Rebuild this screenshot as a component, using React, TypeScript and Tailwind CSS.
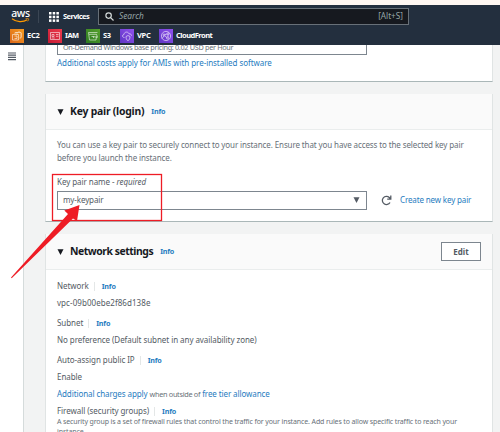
import React from 'react';

function Caret({ className = '' }: { className?: string }) {
  return (
    <svg className={`shrink-0 ${className}`} width="7" height="6" viewBox="0 0 7 6">
      <path d="M0.500 0.300h6L3.500 5.900z" fill="currentColor" />
    </svg>
  );
}

function AwsLogo() {
  return (
    <div className="flex h-[16px] w-[19px] flex-col items-center">
      <span className="h-[9px] text-[10.500px] leading-[8px] font-medium tracking-[-0.3px] text-white">aws</span>
      <svg width="19" height="5" viewBox="0 0 19 5" fill="none" stroke="#ff9900">
        <path d="M1 0.8C5.5 4.3 12 4.4 16.3 1.8" strokeWidth="1.3" />
        <path d="M14.6 0.7c1.4-.3 2.7-.3 3 .1.2.5-.2 1.600-.9 2.500" strokeWidth="0.8" />
      </svg>
    </div>
  );
}

function ServiceTile({ kind, className }: { kind: string; className: string }) {
  return (
    <span className={`flex h-[14px] w-[14px] shrink-0 items-center justify-center ${className}`}>
      <svg width="14" height="14" viewBox="0 0 14 14" fill="none" stroke="#fff" strokeOpacity="0.7" strokeWidth="0.8">
        {kind === 'ec2' && <path d="M5 5V3.500h6v5.500H9.500M2.500 5.500h6V11h-6zM4.500 7h2.500v2.500h-2.500M7 5.500V3M9 3V2M11 5h1M11 7h1" />}
        {kind === 'iam' && <path d="M2.500 3.500h9v7h-9zM4 5.500h2v2H4zM3.700 9h3M8 5.500h2.500M8 7.300h2.500" />}
        {kind === 's3' && <path d="M2.500 3.500h9M2.500 3.500l1 7.500h6.500l.5-3.500M3 5.300h7.500l1 3-4.300-.8M5.500 7.500h2v1.500" />}
        {kind === 'vpc' && <path d="M4.500 8.500C2 8.500 1.800 5.800 4 5.500c.2-3 4.200-3.200 5-.7 2 0 2.700 1 2.500 2M6 7.500l2-1 2 1c0 2.500-.8 3.500-2 4.200-1.300-.7-2-1.800-2-4.200z" />}
        {kind === 'cf' && (
          <>
            <circle cx="7" cy="7" r="4.600" />
            <circle cx="5" cy="6" r="1" />
            <circle cx="9" cy="4.800" r="1" />
            <circle cx="8.500" cy="9" r="1" />
            <path d="M5.800 5.600L8 5M5.700 6.800l2.100 1.600M3 9.500L5 7M9 5.800v2.300" />
          </>
        )}
      </svg>
    </span>
  );
}

const favorites = [
  { kind: 'ec2', label: 'EC2', tile: 'bg-linear-to-tr from-[#d9661a] to-[#f59a1f]', item: 'w-[38px] tracking-[-0.3px]' },
  { kind: 'iam', label: 'IAM', tile: 'bg-linear-to-tr from-[#c51a35] to-[#ee3a4c]', item: 'w-[38px] tracking-[-0.5px]' },
  { kind: 's3', label: 'S3', tile: 'bg-linear-to-tr from-[#2c7a22] to-[#55a02c]', item: 'w-[34px] tracking-[-0.5px]' },
  { kind: 'vpc', label: 'VPC', tile: 'bg-linear-to-tr from-[#5f35c4] to-[#9150ee]', item: 'w-[39px] tracking-[-0.3px]' },
  { kind: 'cf', label: 'CloudFront', tile: 'bg-linear-to-tr from-[#5f35c4] to-[#9150ee]', item: 'w-[60px] tracking-[-0.520px]' },
];

function TopNav() {
  return (
    <header className="h-[40px] shrink-0 bg-[#232f3e] text-white">
      <div className="flex h-[23px] items-center pl-[11px]">
        <AwsLogo />
        <span className="ml-[8px] h-[13px] w-px bg-[#3b4654]" />
        <svg className="ml-[10px]" width="10" height="10" viewBox="0 0 10 10" fill="#fff">
          {[0, 3.7, 7.4].map((y) => [0, 3.7, 7.4].map((x) => <rect key={`${x}-${y}`} x={x} y={y} width="2.500" height="2.500" />))}
        </svg>
        <span className="ml-[4px] w-[35px] text-[7.500px] font-bold tracking-[-0.550px] whitespace-nowrap">Services</span>
        <div className="flex h-[17px] w-[311px] items-center border border-[#687078] bg-[#16191f] pr-[5px] pl-[6px] text-[#95a5a6]">
          <svg width="9" height="9" viewBox="0 0 9 9" fill="none" stroke="#d5dbdb" strokeWidth="1.200">
            <circle cx="3.600" cy="3.600" r="2.700" />
            <path d="M5.600 5.600L8.500 8.500" />
          </svg>
          <span className="ml-[5px] flex-1 text-[8.300px] italic">Search</span>
          <span className="text-[8.200px]">[Alt+S]</span>
        </div>
      </div>
      <div className="flex h-[15px] items-center pl-[10px] text-[7.500px] font-bold">
        {favorites.map((f) => (
          <div key={f.kind} className={`flex shrink-0 items-center gap-[3px] whitespace-nowrap ${f.item}`}>
            <ServiceTile kind={f.kind} className={f.tile} />
            {f.label}
          </div>
        ))}
      </div>
    </header>
  );
}

function Info({ divided = false }: { divided?: boolean }) {
  return (
    <>
      {divided && <span className="ml-[5px] h-[9px] w-px bg-[#e4e7e7]" />}
      <span className="ml-[7px] text-[7.200px] font-bold tracking-[-0.2px] text-[#1f7cc0]">Info</span>
    </>
  );
}

function PanelHeader({ title, children, className }: { title: string; children?: React.ReactNode; className: string }) {
  return (
    <div className="flex h-[36px] shrink-0 items-center border-b border-[#eaeded] bg-[#fafafa] pr-[11px] pl-[11px] text-[#16191f]">
      <Caret />
      <h2 className={`ml-[6px] text-[10.400px] font-bold whitespace-nowrap ${className}`}>{title}</h2>
      <Info />
      {children}
    </div>
  );
}

const panel = 'w-[448px] border-x border-[#e0e4e4] bg-white';

export default function App() {
  return (
    <div className="relative flex h-[432px] w-[500px] flex-col overflow-hidden bg-[#fff7f2] pt-[5px] font-['Noto_Sans','Open_Sans',sans-serif] text-[8px] text-[#545b64]">
      <TopNav />
      <div className="flex min-h-0 flex-1">
        <aside className="w-[24px] shrink-0 border-r border-[#d5dbdb] bg-white pt-[7px] pl-[8px]">
          <svg width="8" height="9" viewBox="0 0 8 9" stroke="#545b64" strokeWidth="1.200">
            <path d="M0 1h8M0 3.200h8M0 5.400h8M0 7.600h8" />
          </svg>
        </aside>
        <main className="flex-1 overflow-hidden bg-[#f2f3f3] pl-[21px]">
          <section className={`h-[37px] border-b border-b-[#aab7b8] pl-[11px] ${panel}`}>
            <div className="flex h-[10px] w-[310px] items-end overflow-hidden border border-t-0 border-[#7d868f] pl-[5px]">
              <span className="mb-[2px] text-[7.300px] leading-[10px] tracking-[-0.330px] whitespace-nowrap text-[#687078]">On-Demand Windows base pricing: 0.02 USD per Hour</span>
            </div>
            <p className="mt-[2px] leading-[12px] tracking-[-0.060px] whitespace-nowrap text-[#1f7cc0]">Additional costs apply for AMIs with pre-installed software</p>
          </section>

          <section className={`mt-[12px] flex h-[128px] flex-col border-b border-b-[#aab7b8] ${panel}`}>
            <PanelHeader title="Key pair (login)" className="tracking-[-0.220px]" />
            <div className="pt-[9px] pl-[11px]">
              <p className="leading-[12.500px] tracking-[-0.110px] whitespace-nowrap text-[#687078]">
                You can use a key pair to securely connect to your instance. Ensure that you have access to the selected key pair
                <br />
                before you launch the instance.
              </p>
              <p className="mt-[12px] leading-[12px] tracking-[-0.060px]">
                Key pair name - <i>required</i>
              </p>
              <div className="mt-[3px] flex items-center">
                <div className="flex h-[19px] w-[310px] items-center justify-between border border-[#7d868f] pr-[6px] pb-[1px] pl-[5px] tracking-[-0.120px]">
                  my-keypair
                  <Caret />
                </div>
                <svg className="ml-[14px]" width="11" height="11" viewBox="0 0 11 11" fill="none" stroke="#545b64" strokeWidth="1.300">
                  <path d="M9 7.500A4.100 4.100 0 1 1 8.300 2.500L9.600 4M9.800 0.500V4.200H6.200" />
                </svg>
                <span className="ml-[8px] pb-[1px] tracking-[-0.140px] whitespace-nowrap text-[#1f7cc0]">Create new key pair</span>
              </div>
            </div>
          </section>

          <section className={`mt-[12px] h-[210px] ${panel}`}>
            <PanelHeader title="Network settings" className="tracking-[-0.450px]">
              <button className="ml-auto h-[19px] w-[40px] border border-[#7d868f] bg-white text-[8px] font-bold text-[#545b64]">Edit</button>
            </PanelHeader>
            <div className="pt-[10px] pl-[11px] leading-[12px] tracking-[-0.060px] whitespace-nowrap">
              <div className="flex h-[12px] items-center">Network<Info divided /></div>
              <p className="mt-[5px] tracking-[0.060px]">vpc-09b00ebe2f86d138e</p>
              <div className="mt-[8px] flex h-[12px] items-center">Subnet<Info divided /></div>
              <p className="mt-[5px]">No preference (Default subnet in any availability zone)</p>
              <div className="mt-[8px] flex h-[12px] items-center">Auto-assign public IP<Info divided /></div>
              <p className="mt-[5px]">Enable</p>
              <p className="mt-[5px] tracking-[-0.090px] text-[#1f7cc0]">
                Additional charges apply <span className="text-[7.300px] tracking-[-0.300px] text-[#687078]">when outside of</span> free tier allowance
              </p>
              <div className="mt-[5px] flex h-[12px] items-center">Firewall (security groups)<Info divided /></div>
              <p className="text-[7px] leading-[10px] tracking-[-0.125px] text-[#687078]">
                A security group is a set of firewall rules that control the traffic for your instance. Add rules to allow specific traffic to reach your
                <br />
                instance.
              </p>
            </div>
          </section>
        </main>
      </div>
      <svg className="pointer-events-none absolute top-0 left-0" width="500" height="432" viewBox="0 0 500 432">
        <rect x="52.500" y="174.500" width="109" height="46" fill="none" stroke="#ee1c25" strokeWidth="1.300" />
        <path d="M79.500 205L64.300 210.500l3.700 3.500L11 277.500l.7.8L73 218.500l4 2.500z" fill="#ee1c25" />
      </svg>
    </div>
  );
}
